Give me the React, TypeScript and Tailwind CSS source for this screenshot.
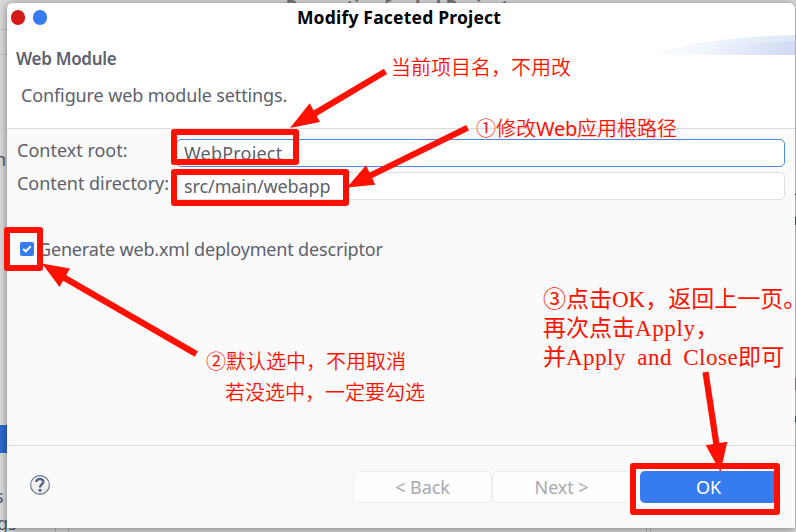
import type { ReactNode } from "react";

function Arrow({ tail, base, tip, a, b }: { tail: string; base: string; tip: string; a: string; b: string }) {
  return (
    <g>
      <path d={`M${tail} L${base}`} stroke="#ff1000" strokeWidth="6.2" />
      <path d={`M${tip} L${a} L${b} Z`} fill="#ff1000" />
    </g>
  );
}

function Note({ className, children }: { className: string; children: ReactNode }) {
  return (
    <div className={`absolute whitespace-nowrap font-['Noto_Sans','Noto_Sans_CJK_SC',sans-serif] text-[20px] font-[350] leading-[31px] ${className}`}>
      {children}
    </div>
  );
}

function Annotations() {
  return (
    <div className="pointer-events-none absolute inset-0 text-[#ff1000]">
      <div className="absolute left-[171px] top-[129px] h-[36px] w-[128px] rounded-[3px] border-6 border-[#ff1000]" />
      <div className="absolute left-[171px] top-[169px] h-[37px] w-[178px] rounded-[3px] border-6 border-[#ff1000]" />
      <div className="absolute left-[4px] top-[227px] h-[44px] w-[39px] rounded-[3px] border-6 border-[#ff1000]" />
      <div className="absolute left-[630px] top-[463px] h-[52px] w-[150px] rounded-[3px] border-6 border-[#ff1000]" />
      <svg className="absolute inset-0" width="796" height="532" viewBox="0 0 796 532">
        <Arrow tail="385.5,71.3" base="313,114.5" tip="290,128" a="309.7,103.3" b="320,122" />
        <Arrow tail="467.6,127.8" base="369,176.3" tip="347,187.5" a="366,165.3" b="375.3,184.7" />
        <Arrow tail="196.3,354" base="63,277" tip="42,263.5" a="70,268.5" b="59.5,287" />
        <Arrow tail="705.5,372" base="716.5,445" tip="720.5,472" a="705.7,445.3" b="727.3,441.8" />
      </svg>
      <Note className="left-[391px] top-[52px]">当前项目名，不用改</Note>
      <Note className="left-[476px] top-[113px]">①修改<span className="font-normal tracking-[-0.3px]">Web</span>应用根路径</Note>
      <Note className="left-[206px] top-[346px]">
        <div>②默认选中，不用取消</div>
        <div className="pl-[19px]">若没选中，一定要勾选</div>
      </Note>
      <div className="absolute left-[543px] top-[285px] whitespace-nowrap font-['Liberation_Serif','Noto_Sans_CJK_SC',serif] text-[23px] leading-[29px]">
        <div>③点击OK，返回上一页。</div>
        <div>再次点击<span className="tracking-[0.6px]">Apply</span>，</div>
        <div>并<span className="tracking-[0.5px] [word-spacing:5px]">Apply and Close</span>即可</div>
      </div>
    </div>
  );
}

function BackWindow() {
  return (
    <div className="absolute inset-0 flex justify-between overflow-hidden bg-[#dadada] text-[18px] leading-none text-[#555b68]">
      <div className="flex w-2 flex-col">
        <div className="mt-[29px] h-[28px] border-y border-[#c2c2c2]" />
        <div className="-ml-[5px] mt-[95px] h-[18px]">n</div>
        <div className="mt-[257px] h-7 shrink-0 bg-[#2f68cf]" />
        <div className="-ml-[5px] mt-[34px] h-[18px]">s</div>
        <div className="-ml-[3px] mt-[9px] flex h-[18px] w-[60px]">gs</div>
      </div>
      <div className="mt-[-3px] h-[18px] whitespace-nowrap pr-[8px] font-bold text-[#777]">Properties for Jsd Project</div>
      <div className="flex w-px flex-col">
        <div className="mt-[194px] h-px bg-[#333]" />
        <div className="mt-[22px] h-2 bg-[#3f5578]" />
        <div className="mt-[153px] h-3 bg-[#b08b6a]" />
        <div className="mt-[26px] h-1.5 bg-[#3f5f90]" />
      </div>
      <div className="absolute inset-x-0 bottom-0 flex h-3 pl-[55px]">
        <div className="w-[14px] border-x border-[#b5b5b5]" />
        <div className="ml-[577px] w-[5px] border-x border-[#b5b5b5]" />
      </div>
    </div>
  );
}

export default function App() {
  return (
    <div className="relative h-[532px] w-[796px] overflow-hidden font-['Noto_Sans','Liberation_Sans',sans-serif]">
      <BackWindow />
      <div className="relative pl-[7px] pr-px pt-[3px]">
        <div className="flex h-[525px] flex-col overflow-hidden rounded-t-[6px] bg-[#fafafa] text-[18px] text-[#5c616c] shadow-[0_1px_9px_rgba(0,0,0,0.45)]">
          <header className="flex h-[126px] shrink-0 flex-col border-b border-[#dcdcdc] bg-white">
            <div className="grid h-[29px] grid-cols-[1fr_auto_1fr] items-center">
              <div className="flex gap-[7.5px] pl-[3.5px]">
                <span className="size-[14.5px] rounded-full bg-[#d41919]" />
                <span className="size-[14.5px] rounded-full bg-[#367bf0]" />
              </div>
              <h1 className="whitespace-nowrap pr-[4px] text-[17.5px] font-bold tracking-[0.2px] text-black">Modify Faceted Project</h1>
            </div>
            <div className="flex h-[96px] justify-between">
              <div className="pt-[14px]">
                <h2 className="pl-[9px] text-[17px] font-semibold leading-[26px] tracking-[-0.3px]">Web Module</h2>
                <p className="pl-[14px] pt-[9px] leading-[28px] tracking-[-0.12px]">Configure web module settings.</p>
              </div>
              <svg className="shrink-0" width="140" height="23" viewBox="0 0 140 23">
                <defs>
                  <linearGradient id="outer"><stop offset="0" stopColor="#fcfdff" /><stop offset="1" stopColor="#dce7f7" /></linearGradient>
                  <linearGradient id="inner"><stop offset="0" stopColor="#f8f9fd" /><stop offset="1" stopColor="#d1daf4" /></linearGradient>
                </defs>
                <path d="M0 23Q30 7 140 3V23Z" fill="url(#outer)" />
                <path d="M32 23Q70 12 140 9V23Z" fill="url(#inner)" />
              </svg>
            </div>
          </header>
          <main className="h-[316px] shrink-0 px-[10px] pt-[10px]">
            <div className="grid grid-cols-[159px_1fr] gap-y-[5px]">
              <label className="whitespace-nowrap leading-[23px]">Context root:</label>
              <div className="flex h-7 items-center rounded-[5px] border border-[#4f88ea] bg-white pl-[7px] tracking-[0.2px]">WebProject</div>
              <label className="whitespace-nowrap leading-[23px] tracking-[-0.04px]">Content directory:</label>
              <div className="flex h-7 items-center rounded-[5px] border border-[#dfdfdf] bg-white pl-[7px] tracking-[-0.1px]">src/main/webapp</div>
            </div>
            <div className="mt-[38px] flex h-[22px] items-center gap-[4px] pl-[3px]">
              <span className="flex size-[14px] items-center justify-center rounded-[2px] bg-[#367bf0]">
                <svg width="10" height="8" viewBox="0 0 10 8"><path d="M1.2 4L3.8 6.3L8.7 1.4" fill="none" stroke="white" strokeWidth="2" /></svg>
              </span>
              <span className="whitespace-nowrap tracking-[-0.17px]">Generate web.xml deployment descriptor</span>
            </div>
          </main>
          <footer className="flex h-[83px] items-center border-t border-[#dcdcdc] pl-[23px] pr-[18px]">
            <svg className="mb-[5px]" width="20" height="20" viewBox="0 0 20 20">
              <defs><linearGradient id="help" x2="0" y2="1"><stop stopColor="#fff" /><stop offset="1" stopColor="#e2e2e2" /></linearGradient></defs>
              <circle cx="10" cy="10" r="9.4" fill="url(#help)" stroke="#66728b" strokeWidth="1.1" />
              <path d="M6.2 7C6.2 2.9 13.6 3 13.4 6.9C13.2 9.3 10 9.3 10 12.6" fill="none" stroke="#536282" strokeWidth="2.4" />
              <circle cx="10" cy="15.3" r="1.5" fill="#536282" />
            </svg>
            <div className="mb-px ml-auto flex">
              <button className="h-8 w-[139px] rounded-[5px] border border-[#ededed] bg-[#fdfdfd] leading-none tracking-[-0.1px] text-[#a7aab0]">&lt; Back</button>
              <button className="h-8 w-[139px] rounded-[5px] border border-[#ededed] bg-[#fdfdfd] leading-none tracking-[-0.1px] text-[#a7aab0]">Next &gt;</button>
              <button className="ml-[9px] h-8 w-[137px] rounded-[5px] bg-[#367bf0] leading-none text-white">OK</button>
            </div>
          </footer>
        </div>
      </div>
      <Annotations />
    </div>
  );
}
